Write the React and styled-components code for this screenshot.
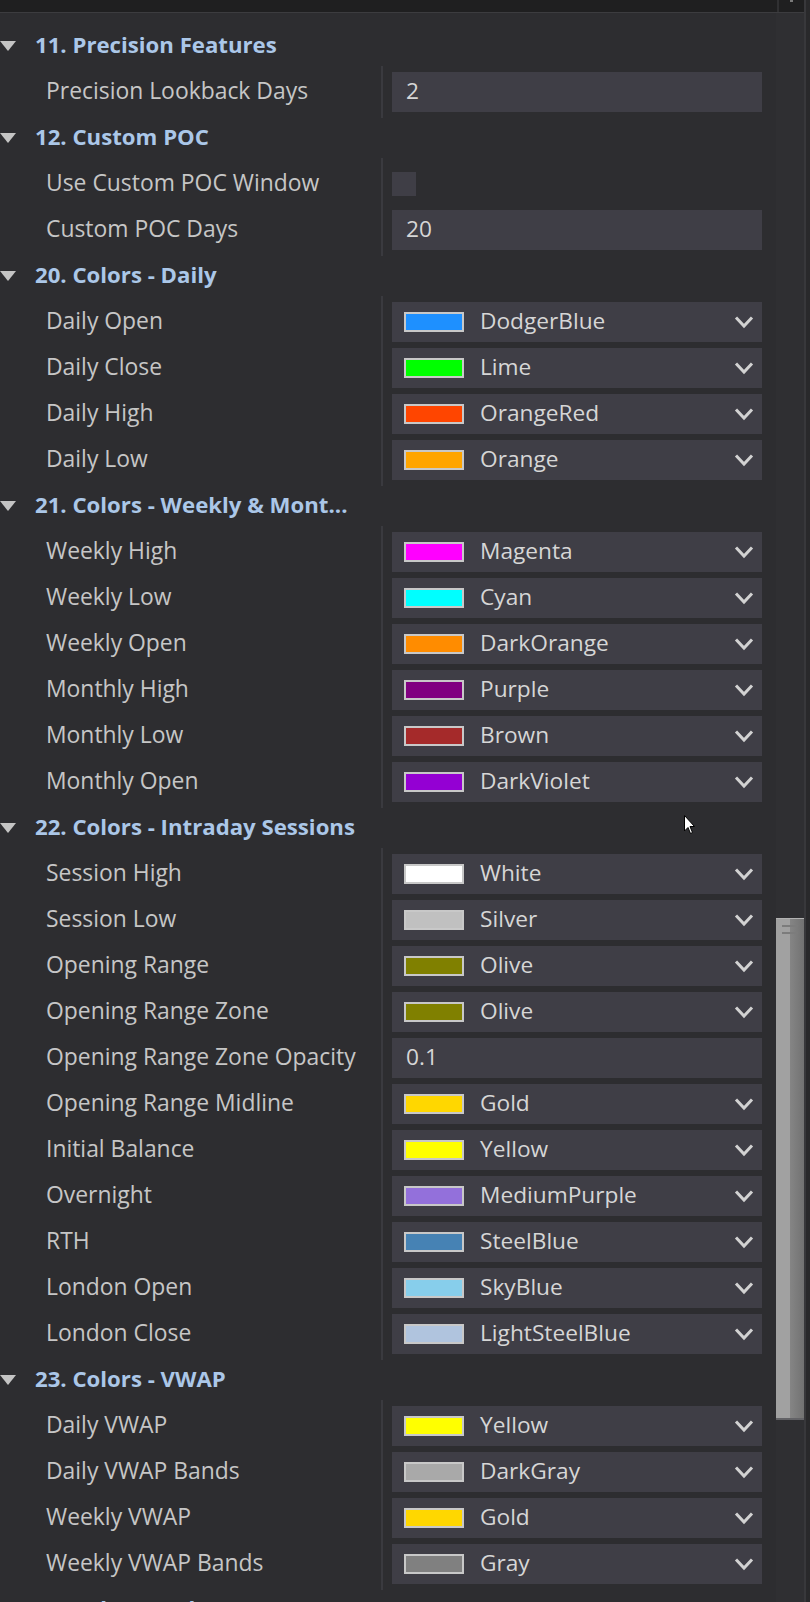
import React from "react";
import styled, { createGlobalStyle } from "styled-components";

const GlobalStyle = createGlobalStyle`
  html, body {
    margin: 0;
    padding: 0;
    background: #2d2d30;
    overflow: hidden;
  }
  * { box-sizing: border-box; }
`;

const sections = [
  {
    title: "11. Precision Features",
    rows: [{ label: "Precision Lookback Days", text: "2" }],
  },
  {
    title: "12. Custom POC",
    rows: [
      { label: "Use Custom POC Window", check: true },
      { label: "Custom POC Days", text: "20" },
    ],
  },
  {
    title: "20. Colors - Daily",
    rows: [
      { label: "Daily Open", color: "DodgerBlue" },
      { label: "Daily Close", color: "Lime" },
      { label: "Daily High", color: "OrangeRed" },
      { label: "Daily Low", color: "Orange" },
    ],
  },
  {
    title: "21. Colors - Weekly & Mont...",
    rows: [
      { label: "Weekly High", color: "Magenta" },
      { label: "Weekly Low", color: "Cyan" },
      { label: "Weekly Open", color: "DarkOrange" },
      { label: "Monthly High", color: "Purple" },
      { label: "Monthly Low", color: "Brown" },
      { label: "Monthly Open", color: "DarkViolet" },
    ],
  },
  {
    title: "22. Colors - Intraday Sessions",
    rows: [
      { label: "Session High", color: "White" },
      { label: "Session Low", color: "Silver" },
      { label: "Opening Range", color: "Olive" },
      { label: "Opening Range Zone", color: "Olive" },
      { label: "Opening Range Zone Opacity", text: "0.1" },
      { label: "Opening Range Midline", color: "Gold" },
      { label: "Initial Balance", color: "Yellow" },
      { label: "Overnight", color: "MediumPurple" },
      { label: "RTH", color: "SteelBlue" },
      { label: "London Open", color: "SkyBlue" },
      { label: "London Close", color: "LightSteelBlue" },
    ],
  },
  {
    title: "23. Colors - VWAP",
    rows: [
      { label: "Daily VWAP", color: "Yellow" },
      { label: "Daily VWAP Bands", color: "DarkGray" },
      { label: "Weekly VWAP", color: "Gold" },
      { label: "Weekly VWAP Bands", color: "Gray" },
    ],
  },
  {
    title: "24. Colors - Value Area & POC",
    rows: [],
  },
];

export default function App() {
  return (
    <>
      <GlobalStyle />
      <Window>
        <Main>
          <TopBar>
            <TopCell>
              <TopMark />
            </TopCell>
          </TopBar>
          <Body>
            <List>
              {sections.map((s) => (
                <section key={s.title}>
                  <Header>
                    <svg width="16" height="10" viewBox="0 0 16 10">
                      <path d="M0 0 H16 L8 10 Z" fill="#c4c4c4" />
                    </svg>
                    <HeaderText>{s.title}</HeaderText>
                  </Header>
                  {s.rows.length > 0 && (
                    <Group>
                      {s.rows.map((r) => (
                        <Row key={r.label}>
                          <Label>{r.label}</Label>
                          <ValueCell>
                            {r.check ? (
                              <CheckBox />
                            ) : (
                              <Box>
                                {r.color ? (
                                  <>
                                    <Swatch $color={r.color} />
                                    <ColorName>{r.color}</ColorName>
                                    <Chevron width="20" height="14" viewBox="0 0 20 14">
                                      <polyline
                                        points="2,2.5 10,11 18,2.5"
                                        fill="none"
                                        stroke="#d2d2d2"
                                        strokeWidth="3"
                                      />
                                    </Chevron>
                                  </>
                                ) : (
                                  <Value>{r.text}</Value>
                                )}
                              </Box>
                            )}
                          </ValueCell>
                        </Row>
                      ))}
                    </Group>
                  )}
                </section>
              ))}
            </List>
            <Track>
              <Thumb>
                <Grip />
              </Thumb>
            </Track>
          </Body>
        </Main>
        <Edge />
        <Cursor width="12" height="20" viewBox="0 0 12 20">
          <path
            d="M0.5 0.5 V16 L4 12.5 L6.5 18.5 L8.5 17.5 L6 11.5 H10.5 Z"
            fill="#fff"
            stroke="#000"
            strokeWidth="1"
          />
        </Cursor>
      </Window>
    </>
  );
}

const Window = styled.div`
  position: relative;
  display: flex;
  width: 810px;
  height: 1602px;
  overflow: hidden;
  background: #2d2d30;
  font-family: "Open Sans", "Noto Sans", "Liberation Sans", sans-serif;
`;

const Main = styled.div`
  flex: 1;
  display: flex;
  flex-direction: column;
  min-width: 0;
`;

const TopBar = styled.div`
  height: 13px;
  flex-shrink: 0;
  display: flex;
  justify-content: flex-end;
  background: #1f1f20;
  border-bottom: 1px solid #3c3c3f;
`;

const TopCell = styled.div`
  width: 27px;
  border-left: 2px solid #303032;
  padding-left: 11px;
`;

const TopMark = styled.div`
  width: 3px;
  height: 2px;
  background: #7a7a7a;
`;

const Body = styled.div`
  flex: 1;
  display: flex;
  min-height: 0;
`;

const List = styled.div`
  flex: 1;
  padding-top: 10px;
  overflow: hidden;
`;

const Header = styled.div`
  height: 46px;
  display: flex;
  align-items: center;

  svg {
    flex-shrink: 0;
  }
`;

const HeaderText = styled.span`
  margin-left: 19px;
  padding-bottom: 4px;
  font-size: 22.2px;
  font-weight: 700;
  color: #abc7e8;
  white-space: nowrap;
`;

/* rows of one section share the thin column divider */
const Group = styled.div`
  margin: -3px 0;
  padding: 3px 0;
  background: linear-gradient(
    to right,
    transparent 381px,
    #3a3a3f 381px,
    #3a3a3f 383px,
    transparent 383px
  );
`;

const Row = styled.div`
  height: 46px;
  display: grid;
  grid-template-columns: 381px 1fr;
  align-items: center;
`;

const Label = styled.div`
  padding: 0 0 4px 46px;
  font-size: 22.9px;
  color: #c6c6c6;
  white-space: nowrap;
`;

const ValueCell = styled.div`
  padding: 0 14px 0 11px;
  display: flex;
  align-items: center;
`;

const Box = styled.div`
  flex: 1;
  height: 40px;
  display: flex;
  align-items: center;
  padding: 0 8px 0 12px;
  background: #3f3e46;
`;

const CheckBox = styled.div`
  width: 24px;
  height: 24px;
  background: #3f3e46;
`;

const Value = styled.span`
  margin-left: 2px;
  padding-bottom: 4px;
  font-size: 22.7px;
  color: #d6d6d6;
`;

const Swatch = styled.div`
  width: 60px;
  height: 20px;
  flex-shrink: 0;
  border: 2px solid #c8c8c8;
  background: ${(p) => p.$color};
`;

const ColorName = styled.span`
  margin-left: 16px;
  padding-bottom: 4px;
  font-size: 22.7px;
  color: #d6d6d6;
  white-space: nowrap;
`;

const Chevron = styled.svg`
  margin-left: auto;
  flex-shrink: 0;
`;

const Track = styled.div`
  width: 28px;
  flex-shrink: 0;
  padding-top: 905px;
  background: #2f2f32;
`;

const Thumb = styled.div`
  height: 502px;
  padding: 6px 6px 0;
  background: linear-gradient(
    to right,
    #a1a1a1 0,
    #a1a1a1 14px,
    #858585 14px,
    #727272 100%
  );
  border-top: 1px solid #b2b2b2;
  border-bottom: 2px solid #626266;
`;

const Grip = styled.div`
  height: 9px;
  border-top: 2px solid #7c7c7c;
  border-bottom: 2px solid #7c7c7c;
`;

const Edge = styled.div`
  width: 6px;
  flex-shrink: 0;
  border-left: 2px solid #38383b;
  background: #29292b;
`;

const Cursor = styled.svg`
  position: absolute;
  left: 684px;
  top: 815px;
`;
